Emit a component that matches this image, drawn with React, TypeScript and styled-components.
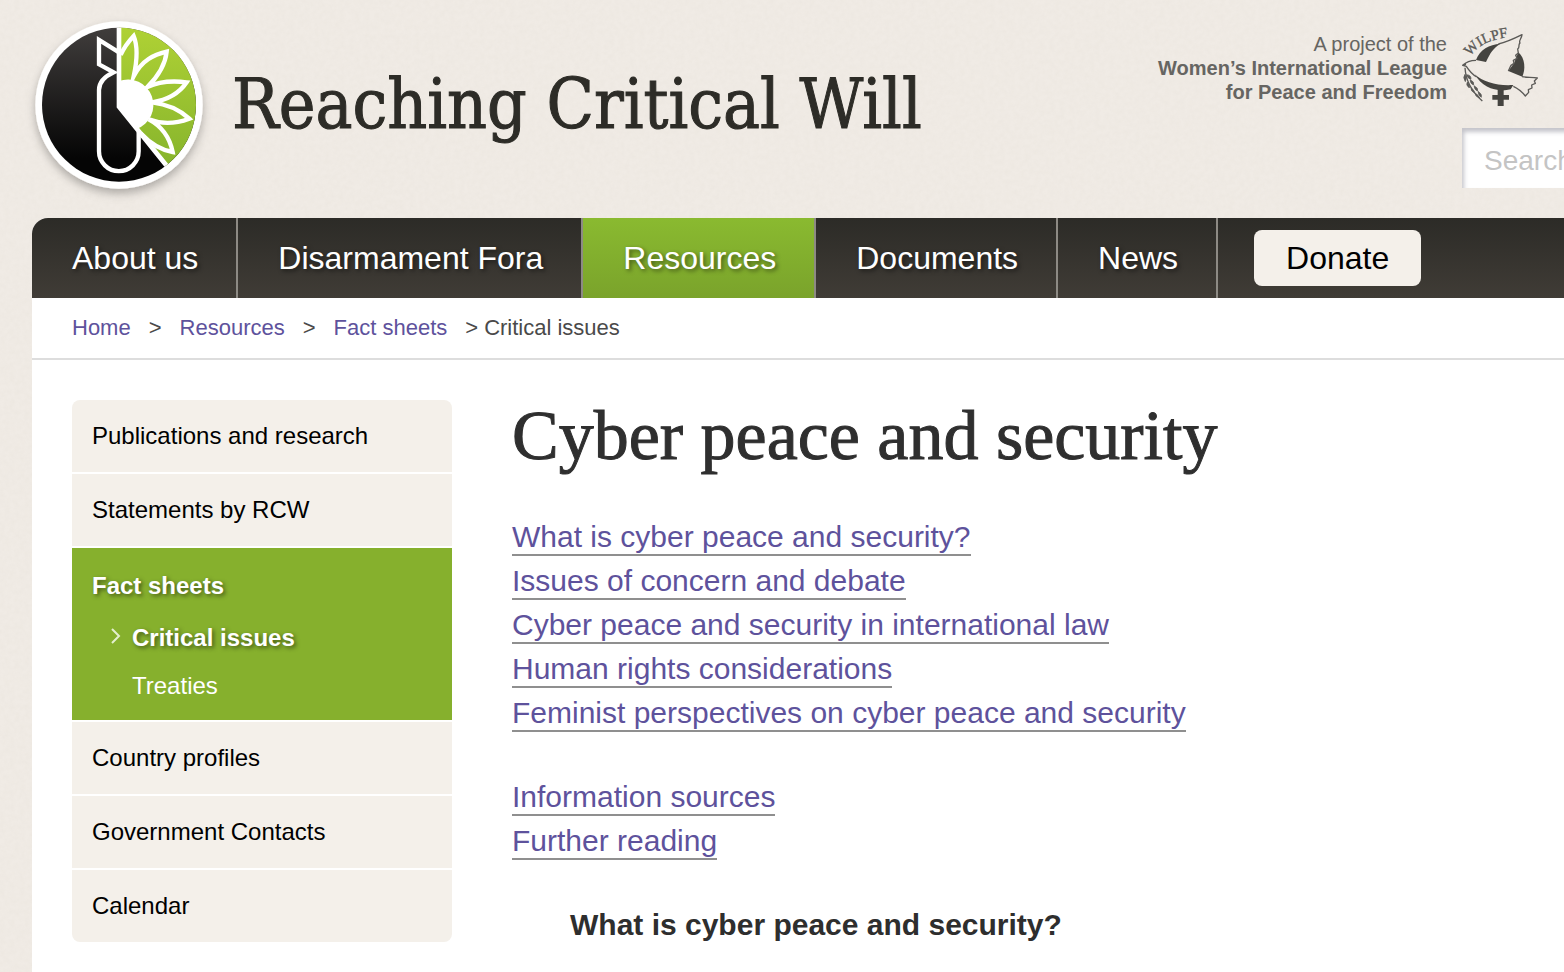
import React from "react";
import styled, { createGlobalStyle, css } from "styled-components";

const sans = `"Liberation Sans", Arial, Helvetica, sans-serif`;

const GlobalStyle = createGlobalStyle`
  *, *::before, *::after { box-sizing: border-box; }
  html { background: #f0ebe5; }
  body { margin: 0; font-family: ${sans}; color: #2e2e2e; overflow-x: hidden; }
  ul, ol { list-style: none; margin: 0; padding: 0; }
  a { text-decoration: none; }
`;

const Page = styled.div`
  position: relative;
  display: flex;
  flex-direction: column;
  min-height: 100vh;
  overflow: hidden;
`;

const Paper = styled.svg`
  position: absolute;
  inset: 0;
  width: 100%;
  height: 100%;
  opacity: 0.12;
  pointer-events: none;
`;

const Header = styled.header`
  position: relative;
  display: flex;
  justify-content: space-between;
  padding: 10px 0 8px 20px;
`;

const Brand = styled.a`
  display: flex;
  align-items: center;
  gap: 12px;
  color: #2d2c27;
`;

const BrandMark = styled.svg`
  display: block;
  width: 200px;
  height: 200px;
`;

const BrandName = styled.span`
  font-family: "DejaVu Serif Condensed", "DejaVu Serif", serif;
  font-stretch: condensed;
  font-size: 69px;
  -webkit-text-stroke: 1px currentColor;
  line-height: 80px;
  padding-bottom: 12px;
  white-space: nowrap;
`;

const Utility = styled.div`
  display: flex;
  flex-direction: column;
  align-items: flex-end;
  gap: 10px;
  padding-top: 8px;
`;

const Project = styled.a`
  display: flex;
  align-items: center;
  gap: 13px;
  padding-right: 24px;
  color: #666562;
  font-size: 20px;
  line-height: 24px;
  text-align: right;
  white-space: nowrap;
`;

const Dove = styled.svg`
  display: block;
  width: 80px;
  height: 100px;
`;

const SearchForm = styled.form`
  width: 102px;
`;

const SearchInput = styled.input`
  display: block;
  width: 380px;
  height: 60px;
  padding: 5px 22px 0;
  border: 0;
  border-radius: 0;
  background: #fff;
  box-shadow: inset 2px 4px 4px rgba(60, 60, 80, 0.3);
  font: 28px ${sans};
  color: #333;
  &::placeholder { color: #c4c4c4; opacity: 1; }
`;

const Sheet = styled.div`
  position: relative;
  flex: 1;
  margin-left: 32px;
  background: #fff;
  border-top-left-radius: 16px;
`;

const Nav = styled.nav`
  display: flex;
  align-items: center;
  height: 80px;
  background: linear-gradient(#2c2b27, #403c36);
  border-top-left-radius: 16px;
`;

const NavList = styled.ul`
  display: flex;
`;

const NavLink = styled.a<{ $active?: boolean }>`
  display: block;
  padding: 0 38px 0 40px;
  border-right: 2px solid #8d8a84;
  font-size: 32px;
  line-height: 80px;
  color: #fff;
  text-shadow: 2px 2px 4px rgba(0, 0, 0, 0.5);
  white-space: nowrap;
  ${(p) => p.$active && css`background: linear-gradient(#8aba30, #7aa32b);`}
`;

const Donate = styled.button`
  height: 56px;
  margin-left: 36px;
  padding: 0 32px;
  border: 0;
  border-radius: 8px;
  background: #f4f0ea;
  font: 32px ${sans};
  color: #000;
`;

const Breadcrumb = styled.nav`
  padding: 0 40px;
  border-bottom: 2px solid #ddd;
  font-size: 22px;
  line-height: 60px;
  color: #4a4a4a;
`;

const Crumbs = styled.ol`
  display: flex;
  a { color: #5e529c; }
`;

const Arrow = styled.span<{ $last?: boolean }>`
  margin: 0 ${(p) => (p.$last ? 6 : 18)}px 0 18px;
`;

const Columns = styled.div`
  display: flex;
  align-items: flex-start;
  gap: 60px;
  padding: 40px 40px 0;
`;

const Sidebar = styled.nav`
  flex: 0 0 380px;
  border-radius: 8px;
  overflow: hidden;
  font-size: 24px;
`;

const SideList = styled.ul`
  display: grid;
  gap: 2px;
`;

const SideLink = styled.a`
  display: block;
  padding: 0 20px;
  background: #f4f0ea;
  color: #000;
  line-height: 72px;
`;

const SideGroup = styled.div`
  padding: 14px 20px 10px;
  background: #86b02d;
  line-height: 48px;
`;

const GroupLink = styled.a<{ $current?: boolean }>`
  display: block;
  color: #fff;
  ${(p) => p.$current && css`
    font-weight: bold;
    text-shadow: 2px 2px 4px rgba(0, 0, 0, 0.5);
  `}
`;

const SubList = styled.ul`
  padding-top: 4px;
`;

const SubItem = styled.li`
  display: grid;
  grid-template-columns: 40px 1fr;
  align-items: center;
`;

const Chevron = styled.svg`
  width: 10px;
  height: 16px;
  margin: 0 0 5px 19px;
`;

const Article = styled.main`
  flex: 1;
  min-width: 0;
`;

const Title = styled.h1`
  margin: 0;
  padding-bottom: 3px;
  font-family: "Liberation Serif", serif;
  font-size: 70px;
  font-weight: normal;
  -webkit-text-stroke: 1px currentColor;
  line-height: 72px;
  color: #2f2f2f;
`;

const LinkList = styled.ul`
  margin-top: 40px;
  font-size: 30px;
  line-height: 44px;
`;

const TextLink = styled.a`
  color: #5e529c;
  border-bottom: 2px solid #8f8f8f;
  padding-bottom: 1px;
`;

const SectionTitle = styled.h2`
  margin: 40px 0 24px 58px;
  font-size: 30px;
  line-height: 44px;
  color: #2e2e2e;
`;

const mainLinks = [
  { label: "About us" },
  { label: "Disarmament Fora" },
  { label: "Resources", active: true },
  { label: "Documents" },
  { label: "News" },
];

const topics = [
  "What is cyber peace and security?",
  "Issues of concern and debate",
  "Cyber peace and security in international law",
  "Human rights considerations",
  "Feminist perspectives on cyber peace and security",
];

function Logo() {
  return (
    <BrandMark viewBox="0 0 600 600" aria-hidden="true">
      <defs>
        <linearGradient id="ink" x1="0" y1="0" x2="0" y2="1">
          <stop offset="0" stopColor="#403d3c" />
          <stop offset="0.85" stopColor="#050505" />
        </linearGradient>
        <linearGradient id="leaf" x1="0" y1="0" x2="0" y2="1">
          <stop offset="0" stopColor="#b0d235" />
          <stop offset="1" stopColor="#86b42c" />
        </linearGradient>
        <clipPath id="disc"><circle cx="297" cy="284" r="231" /></clipPath>
        <filter id="lift" x="-20%" y="-20%" width="140%" height="140%">
          <feDropShadow dx="0" dy="14" stdDeviation="14" floodColor="#000" floodOpacity="0.28" />
        </filter>
      </defs>
      <circle cx="297" cy="285" r="251" fill="#fff" filter="url(#lift)" />
      <circle cx="297" cy="284" r="231" fill="url(#ink)" />
      <g clipPath="url(#disc)">
        <path d="M297 40V290L446 475L560 440V40Z" fill="url(#leaf)" />
        <path d="M297 40V290L446 475" fill="none" stroke="#fff" strokeWidth="14" />
      </g>
      <path d="M297 213A73 73 0 0 1 350 357L295 290Z" fill="#fff" />
      <g fill="none" stroke="#fff" strokeWidth="13" strokeMiterlimit="8">
        <path d="M297 127L237 90V163L281 187C253 200 237 216 237 240V424A59 59 0 0 0 356 424V366" />
        <path d="M302 135C312 112 326 94 341 78C355 112 351 154 341 199C366 150 402 134 440 125C436 163 414 199 382 231C420 213 460 212 500 217C477 251 438 271 396 277C440 282 480 300 508 326C468 341 424 343 386 328C428 350 450 386 458 426C420 420 390 400 362 370" />
      </g>
    </BrandMark>
  );
}

function DoveMark() {
  return (
    <Dove viewBox="60 9 240 300" role="img" aria-label="WILPF">
      <path id="arc" d="M91 125Q122 73 222 65" fill="none" />
      <text fill="#5b5a57" stroke="#5b5a57" strokeWidth="1" fontFamily="Liberation Serif, serif" fontSize="44">
        <textPath href="#arc">WILPF</textPath>
      </text>
      <g fill="#454440">
        <path d="M108 135C119 104 148 88 181 86C160 99 150 115 138 141Z" />
        <path d="M235 112C256 130 257 164 247 185L205 168L222 145Z" />
        <path d="M104 178C130 202 172 213 220 210L212 223C174 233 128 220 104 178Z" />
        <path d="M173 222H191V240H207V254H191V273H173V254H157V240H173Z" />
      </g>
      <g fill="none" stroke="#5b5a57" strokeWidth="4" strokeLinejoin="round">
        <path d="M108 136C96 136 79 140 68 151L79 154C88 168 97 178 110 186M68 151L78 148M175 87C198 82 222 71 246 59C245 71 235 77 240 84C233 90 241 97 233 102L235 114L227 121L231 130L220 136L222 145L213 151L205 168M246 185C262 188 276 186 292 189L283 198L286 205L275 210L276 219L265 224L266 232L256 243C246 230 235 221 220 214" />
        <path d="M75 158C77 196 97 231 127 258" />
      </g>
      <g fill="#5b5a57" stroke="#5b5a57" strokeWidth="2">
        <path d="M75 178Q67 187 76 200Q82 190 75 178ZM80 179Q94 180 93 193Q83 191 80 179ZM82 201Q76 210 88 219Q91 211 82 201ZM90 194Q104 200 101 210Q91 207 90 194ZM93 218Q91 228 104 234Q104 226 93 218ZM102 212Q116 219 113 228Q103 225 102 212ZM106 235Q104 244 119 249Q116 240 106 235ZM114 229Q128 238 124 247Q115 243 114 229Z" />
      </g>
    </Dove>
  );
}

export default function App() {
  return (
    <Page>
      <GlobalStyle />
      <Paper aria-hidden="true">
        <filter id="grain">
          <feTurbulence type="fractalNoise" baseFrequency="0.2" numOctaves="3" seed="4" />
          <feColorMatrix values="0 0 0 0 0.66  0 0 0 0 0.62  0 0 0 0 0.54  1.4 0 0 0 -0.4" />
        </filter>
        <rect width="100%" height="100%" filter="url(#grain)" />
      </Paper>
      <Header>
        <Brand href="#home">
          <Logo />
          <BrandName>Reaching Critical Will</BrandName>
        </Brand>
        <Utility>
          <Project href="#wilpf">
            <span>
              A project of the
              <br />
              <b>Women’s International League</b>
              <br />
              <b>for Peace and Freedom</b>
            </span>
            <DoveMark />
          </Project>
          <SearchForm role="search">
            <SearchInput type="search" placeholder="Search" aria-label="Search" />
          </SearchForm>
        </Utility>
      </Header>
      <Sheet>
        <Nav aria-label="Main">
          <NavList>
            {mainLinks.map((l) => (
              <li key={l.label}>
                <NavLink href="#" $active={l.active}>{l.label}</NavLink>
              </li>
            ))}
          </NavList>
          <Donate type="button">Donate</Donate>
        </Nav>
        <Breadcrumb aria-label="Breadcrumb">
          <Crumbs>
            <li><a href="#">Home</a><Arrow>&gt;</Arrow></li>
            <li><a href="#">Resources</a><Arrow>&gt;</Arrow></li>
            <li><a href="#">Fact sheets</a><Arrow $last>&gt;</Arrow></li>
            <li aria-current="page">Critical issues</li>
          </Crumbs>
        </Breadcrumb>
        <Columns>
          <Sidebar aria-label="Resources">
            <SideList>
              <li><SideLink href="#">Publications and research</SideLink></li>
              <li><SideLink href="#">Statements by RCW</SideLink></li>
              <li>
                <SideGroup>
                  <GroupLink href="#" $current>Fact sheets</GroupLink>
                  <SubList>
                    <SubItem>
                      <Chevron viewBox="0 0 10 16" aria-hidden="true">
                        <path d="M1 1L8 8L1 15" fill="none" stroke="#e4efcf" strokeWidth="2" />
                      </Chevron>
                      <GroupLink href="#" $current>Critical issues</GroupLink>
                    </SubItem>
                    <SubItem>
                      <span />
                      <GroupLink href="#">Treaties</GroupLink>
                    </SubItem>
                  </SubList>
                </SideGroup>
              </li>
              <li><SideLink href="#">Country profiles</SideLink></li>
              <li><SideLink href="#">Government Contacts</SideLink></li>
              <li><SideLink href="#">Calendar</SideLink></li>
            </SideList>
          </Sidebar>
          <Article>
            <Title>Cyber peace and security</Title>
            <LinkList>
              {topics.map((t) => (
                <li key={t}><TextLink href="#">{t}</TextLink></li>
              ))}
            </LinkList>
            <LinkList>
              <li><TextLink href="#">Information sources</TextLink></li>
              <li><TextLink href="#">Further reading</TextLink></li>
            </LinkList>
            <SectionTitle>What is cyber peace and security?</SectionTitle>
          </Article>
        </Columns>
      </Sheet>
    </Page>
  );
}
